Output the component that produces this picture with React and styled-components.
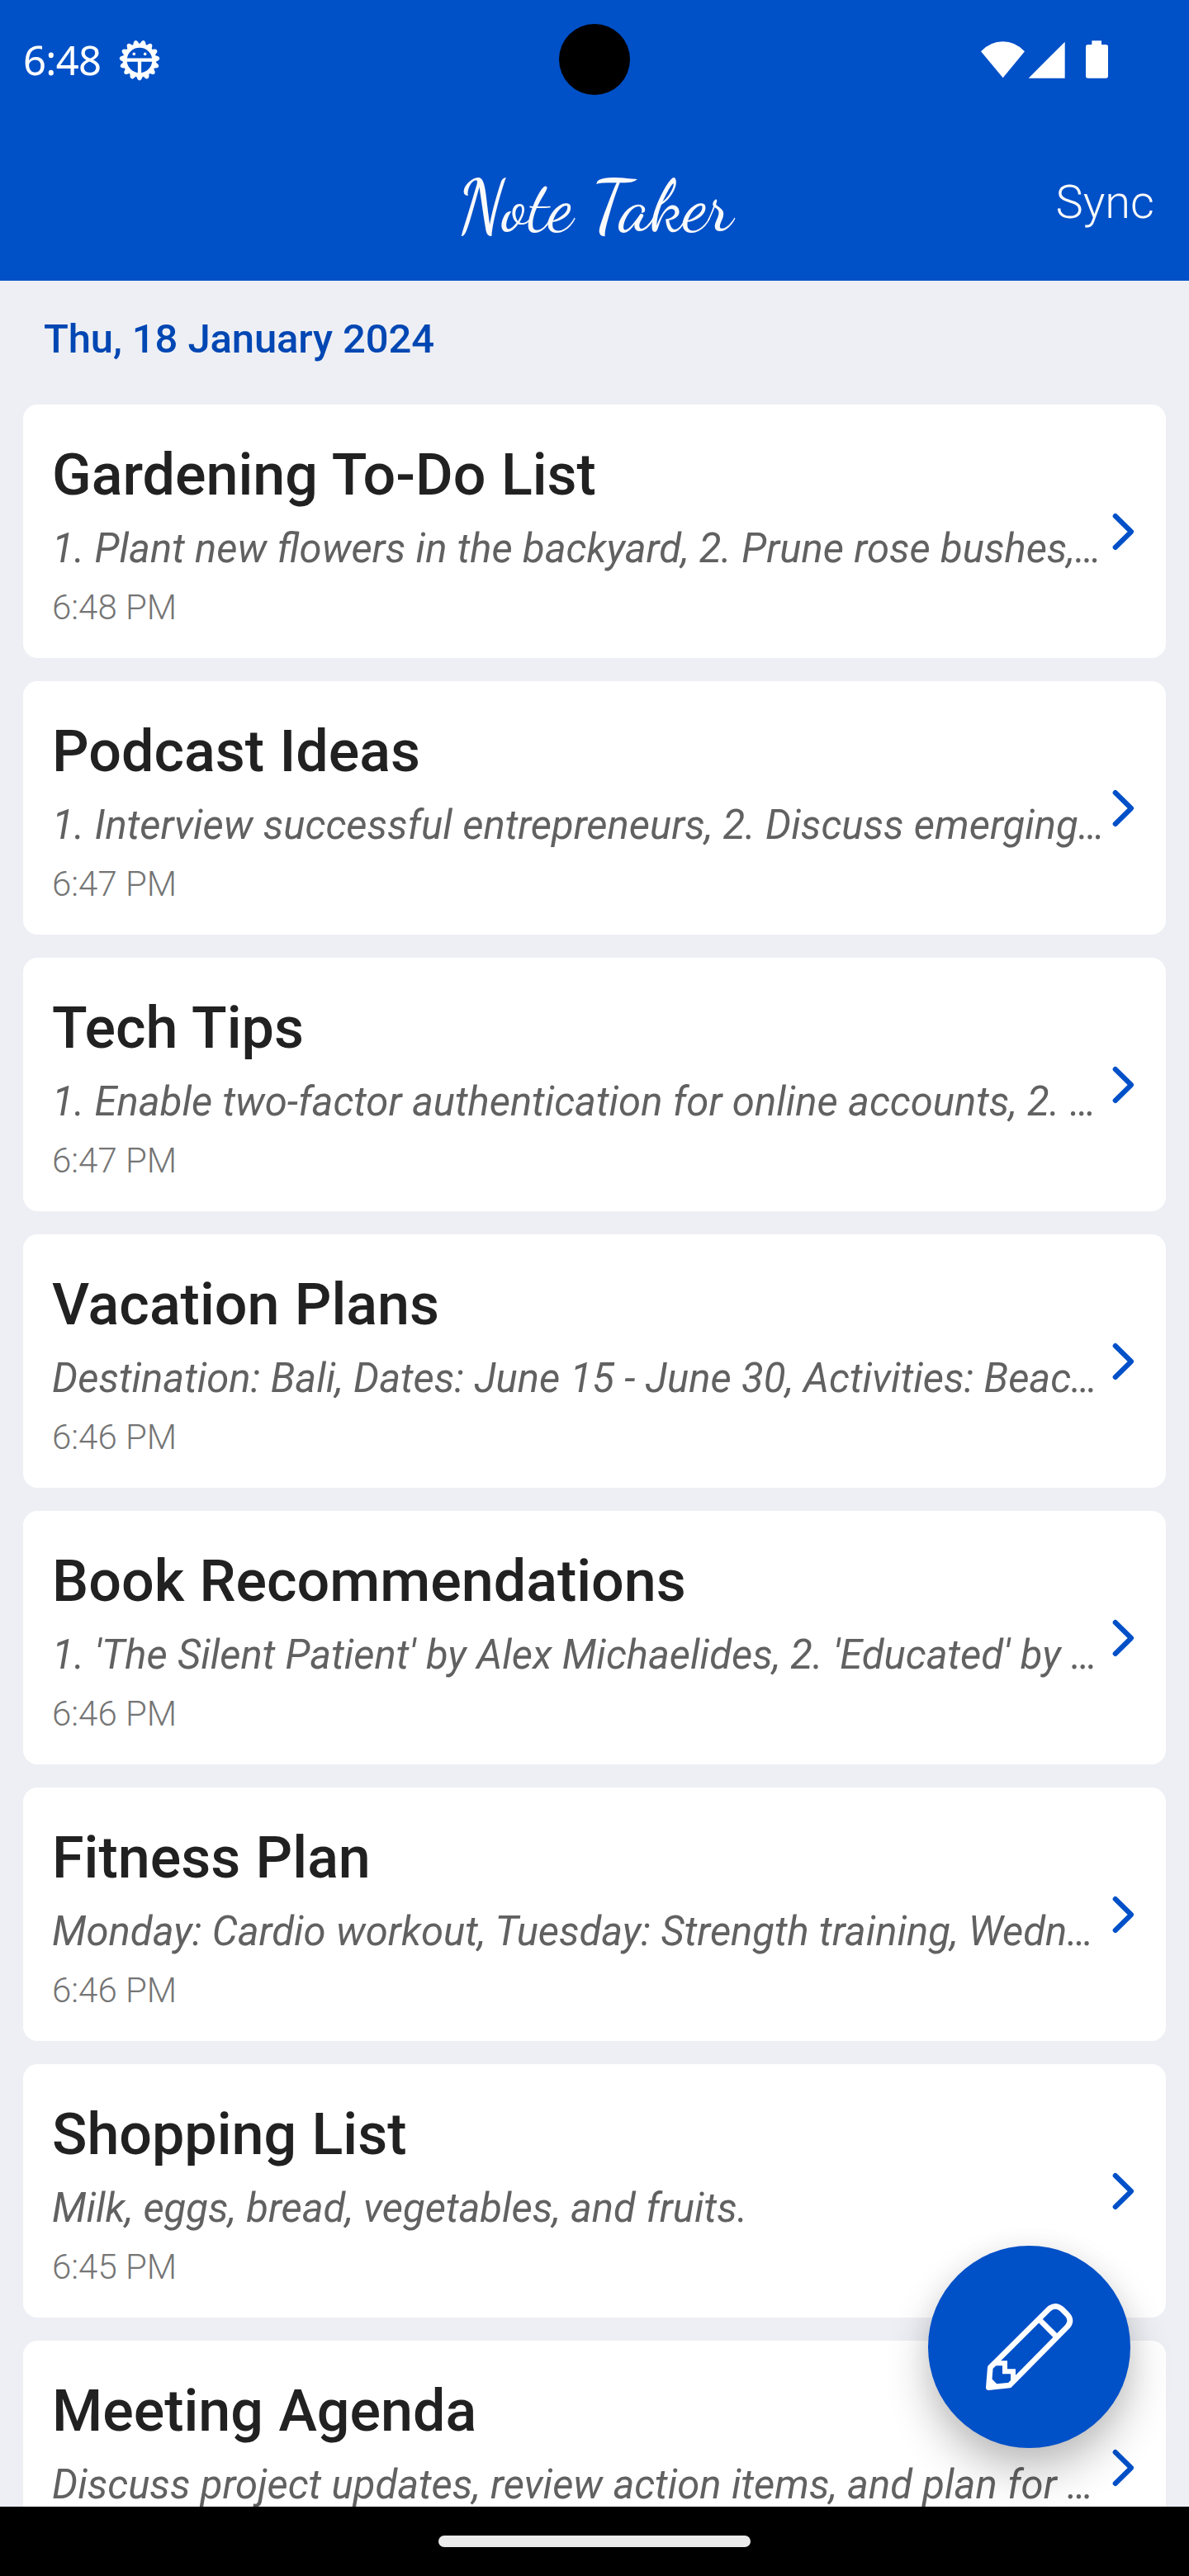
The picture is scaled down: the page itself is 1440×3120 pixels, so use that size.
import React from 'react';
import styled, { createGlobalStyle } from 'styled-components';

const BLUE = '#0050c8';

const GlobalStyle = createGlobalStyle`
  html, body { margin: 0; padding: 0; }
  body { background: #eeeff4; }
  * { box-sizing: border-box; }
`;

const Screen = styled.div`
  position: relative;
  display: flex;
  flex-direction: column;
  width: 1440px;
  height: 3120px;
  overflow: hidden;
  background: #eeeff4;
  font-family: Roboto, sans-serif;
`;

const StatusBar = styled.div`
  display: flex;
  align-items: center;
  justify-content: space-between;
  height: 144px;
  flex: none;
  padding: 0 97px 0 28px;
  background: ${BLUE};
`;

const StatusGroup = styled.div`
  display: flex;
  align-items: center;
  gap: 22px;
`;

const Clock = styled.span`
  font: 400 49px/66px 'Noto Sans', sans-serif;
  letter-spacing: -0.7px;
  color: #fff;
`;

const Camera = styled.div`
  position: absolute;
  left: 677px;
  top: 29px;
  width: 86px;
  height: 86px;
  border-radius: 50%;
  background: #000;
`;

const AppBar = styled.header`
  display: grid;
  grid-template-columns: 1fr auto 1fr;
  align-items: center;
  height: 196px;
  flex: none;
  padding: 0 42px;
  background: ${BLUE};
`;

const AppTitle = styled.h1`
  grid-column: 2;
  margin: 0;
  padding: 16px 0 0 2px;
  font: 400 87.5px/106px 'Dancing Script', cursive;
  letter-spacing: -0.2px;
  color: #fafafa;
`;

const SyncButton = styled.button`
  justify-self: end;
  padding: 5px 0 0;
  border: 0;
  background: none;
  font: 300 56px/66px Roboto, sans-serif;
  color: #fafafa;
`;

const Content = styled.main`
  flex: 1;
  min-height: 0;
  overflow: hidden;
`;

const DateHeading = styled.h2`
  height: 150px;
  margin: 0;
  padding: 41px 53px 0;
  font-weight: 500;
  font-size: 49px;
  line-height: 59px;
  letter-spacing: -0.12px;
  color: #0047b3;
`;

const NoteList = styled.div`
  display: flex;
  flex-direction: column;
  gap: 28px;
  padding: 0 28px;
`;

const NoteCard = styled.article`
  display: flex;
  align-items: center;
  height: 307px;
  flex: none;
  padding: 0 35px;
  border-radius: 17.5px;
  background: #fff;
`;

const NoteText = styled.div`
  align-self: flex-start;
  display: flex;
  flex-direction: column;
  flex: none;
  width: 1277px;
  padding-top: 43px;
`;

const NoteTitle = styled.h3`
  margin: 0;
  font-weight: 500;
  font-size: 70px;
  line-height: 84px;
  word-spacing: 1px;
  color: #212121;
`;

const NoteBody = styled.p`
  margin: 18px 0 0;
  font-style: italic;
  font-size: 49px;
  line-height: 59px;
  word-spacing: 0.3px;
  white-space: nowrap;
  color: #616161;
`;

const NoteTime = styled.time`
  margin-top: 17px;
  font-weight: 300;
  font-size: 42px;
  line-height: 49px;
  color: #757575;
`;

const Chevron = styled.svg`
  flex: none;
  width: 35px;
  height: 56px;
  margin-left: 3px;
`;

const Fab = styled.button`
  position: absolute;
  left: 1124px;
  top: 2720px;
  width: 245px;
  height: 245px;
  padding: 0;
  border: 0;
  border-radius: 50%;
  background: ${BLUE};
  box-shadow: 0 28px 52px rgba(0, 0, 0, 0.24), 0 2px 32px rgba(0, 0, 0, 0.06);
`;

const NavBar = styled.footer`
  position: relative;
  display: flex;
  align-items: center;
  justify-content: center;
  height: 84px;
  flex: none;
  background: #000;
`;

const Handle = styled.div`
  width: 378px;
  height: 14px;
  border-radius: 7px;
  background: #ebebeb;
`;

const notes = [
  { title: 'Gardening To-Do List', body: '1. Plant new flowers in the backyard, 2. Prune rose bushes,…', time: '6:48 PM' },
  { title: 'Podcast Ideas', body: '1. Interview successful entrepreneurs, 2. Discuss emerging…', time: '6:47 PM' },
  { title: 'Tech Tips', body: '1. Enable two-factor authentication for online accounts, 2. …', time: '6:47 PM' },
  { title: 'Vacation Plans', body: 'Destination: Bali, Dates: June 15 - June 30, Activities: Beac…', time: '6:46 PM' },
  { title: 'Book Recommendations', body: "1. 'The Silent Patient' by Alex Michaelides, 2. 'Educated' by …", time: '6:46 PM' },
  { title: 'Fitness Plan', body: 'Monday: Cardio workout, Tuesday: Strength training, Wedn…', time: '6:46 PM' },
  { title: 'Shopping List', body: 'Milk, eggs, bread, vegetables, and fruits.', time: '6:45 PM' },
  { title: 'Meeting Agenda', body: 'Discuss project updates, review action items, and plan for …' },
];

const teeth = Array.from({ length: 15 }, (_, i) => 90 + i * 24);

function GearFace() {
  return (
    <svg width="50" height="52" viewBox="-25 -27 50 52">
      <circle r="17.800" fill="none" stroke="#fff" strokeWidth="5" />
      {teeth.map((a) => (
        <path key={a} transform={`rotate(${a})`} d="M18.500-4.300L23-2.300Q25.800 0 23 2.300L18.500 4.300Z" fill="#fff" />
      ))}
      <path d="M-17-.4H17M0-.4V19" stroke="#fff" strokeWidth="4.300" />
      <circle cx="-6.700" cy="-7.600" r="1.800" fill="#fff" />
      <circle cx="6.700" cy="-7.600" r="1.800" fill="#fff" />
    </svg>
  );
}

function SignalIcons() {
  return (
    <svg width="155" height="46" viewBox="84 87 465 138" fill="#fff">
      <path d="M84 127Q118 91 163.500 91T243 127L164 223Z" />
      <path d="M257 224L389 92V224Z" />
      <path d="M487 88H522V102H538Q546 102 546 110V216Q546 224 538 224H473Q465 224 465 216V110Q465 102 473 102H487Z" />
    </svg>
  );
}

function Pencil() {
  return (
    <svg width="245" height="245" viewBox="132 120 735 735" fill="none" stroke="#fff" strokeWidth="20" strokeLinejoin="round">
      <path d="M358 562L572 349Q594 331 617 349L638 370Q657 392 638 414L428 627L352 635Z" />
      <path d="M535 387L600 452" />
      <path d="M376 547H411V577H441V608" strokeLinejoin="miter" strokeWidth="18" />
      <path d="M350 590L357 597L392 632L350 638Z" fill="#fff" stroke="none" />
    </svg>
  );
}

export default function App() {
  return (
    <Screen>
      <GlobalStyle />
      <StatusBar>
        <StatusGroup>
          <Clock>6:48</Clock>
          <GearFace />
        </StatusGroup>
        <SignalIcons />
      </StatusBar>
      <Camera />
      <AppBar>
        <AppTitle>Note Taker</AppTitle>
        <SyncButton>Sync</SyncButton>
      </AppBar>
      <Content>
        <DateHeading>Thu, 18 January 2024</DateHeading>
        <NoteList>
          {notes.map(({ title, body, time }) => (
            <NoteCard key={title}>
              <NoteText>
                <NoteTitle>{title}</NoteTitle>
                <NoteBody>{body}</NoteBody>
                {time && <NoteTime>{time}</NoteTime>}
              </NoteText>
              <Chevron viewBox="0 0 35 56" fill="none" stroke={BLUE} strokeWidth="6" strokeLinecap="round" strokeLinejoin="round">
                <path d="M7.700 9L27 28L7.700 47" />
              </Chevron>
            </NoteCard>
          ))}
        </NoteList>
      </Content>
      <Fab aria-label="New note">
        <Pencil />
      </Fab>
      <NavBar>
        <Handle />
      </NavBar>
    </Screen>
  );
}
